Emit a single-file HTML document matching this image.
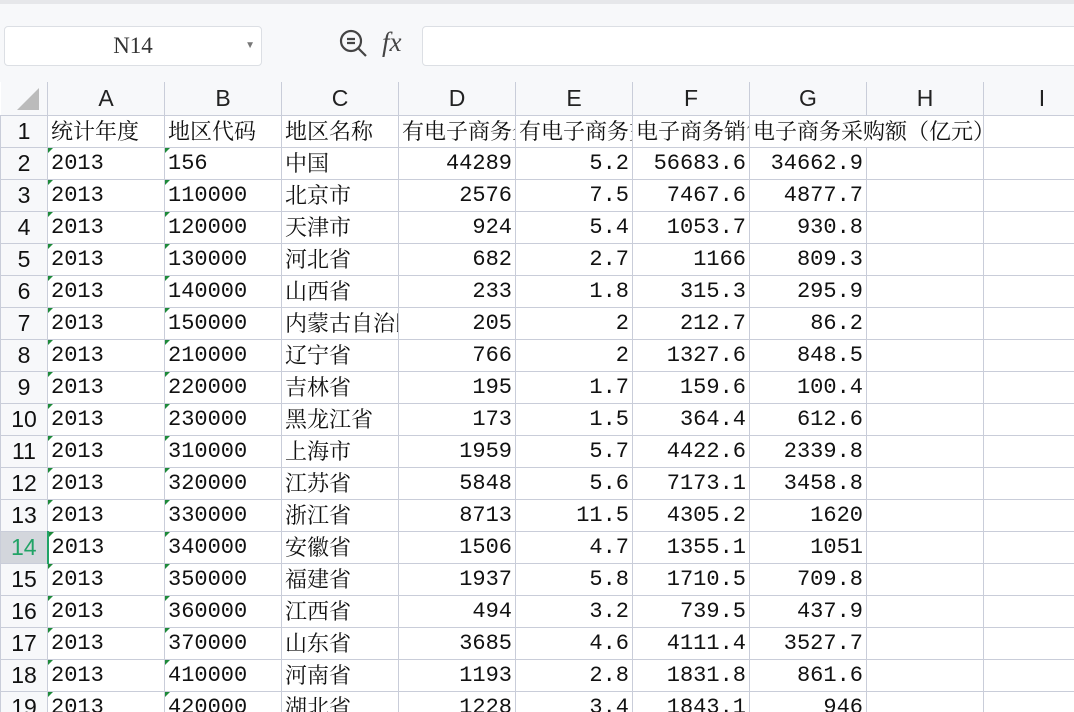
<!DOCTYPE html>
<html><head><meta charset="utf-8"><style>
body{margin:0;width:1074px;height:712px;overflow:hidden;background:#fff;position:relative;font-family:"Liberation Serif","Noto Serif CJK SC",serif}
.top{position:absolute;left:0;top:0;width:1074px;height:82px;background:#f7f8fa;border-top:4px solid #e6e7ea;box-sizing:border-box}
.nb{position:absolute;left:4px;top:22px;width:258px;height:40px;background:#fff;border:1px solid #dcdfe4;border-radius:4px;box-sizing:border-box;font-size:23px;line-height:38px;text-align:center;color:#333}
.nb span{position:absolute;right:6px;top:0;font-size:10px;color:#777}
.fx{position:absolute;left:422px;top:22px;width:660px;height:40px;background:#fff;border:1px solid #dcdfe4;border-radius:4px;box-sizing:border-box}
.wrap{position:absolute;left:0;top:82px;width:1074px;height:630px;overflow:hidden}
table{border-collapse:collapse;table-layout:fixed;width:1100px}
td{border:1px solid #c9cdd9;height:31px;padding:0 3px;white-space:nowrap;overflow:hidden;font-size:23px;line-height:31px;color:#111;position:relative}
tr.h td{height:33px;font-family:"Liberation Sans","Noto Sans CJK SC",sans-serif;font-size:23px;text-align:center;color:#222;background:#f7f8fa;border-top:none}
td.r{font-family:"Liberation Sans",sans-serif;text-align:center;background:#f7f8fa;padding:0;font-size:23px}
td.n{text-align:right;font-family:"Liberation Mono",monospace;font-size:22px}
td.m{font-family:"Liberation Mono",monospace;font-size:22px}
td.g::before{content:"";position:absolute;left:0;top:0;border-top:5px solid #1e8a3a;border-right:5px solid transparent}
td.c{font-family:"Liberation Serif","Noto Serif CJK SC",serif;font-size:22px}
</style></head><body>
<div class="top">
<div class="nb">N14<span>▼</span></div>
<svg style="position:absolute;left:338px;top:24px" width="32" height="32" viewBox="0 0 32 32" fill="none" stroke="#444" stroke-width="2.2"><circle cx="13" cy="13" r="10"/><path d="M20.5 20.5L28 28M9 11h8M9 15h8"/></svg>
<div style="position:absolute;left:382px;top:23px;font-size:27px;font-style:italic;color:#444;font-family:'Liberation Serif',serif">fx</div>
<div class="fx"></div>
</div>
<div class="wrap">
<table>
<colgroup><col style="width:47px"><col style="width:117px"><col style="width:117px"><col style="width:117px"><col style="width:117px"><col style="width:117px"><col style="width:117px"><col style="width:117px"><col style="width:117px"><col style="width:117px"></colgroup>
<tr class="h"><td style="border-left:none"><svg width="22" height="22" style="position:absolute;left:16px;top:6px"><path d="M22 0V22H0Z" fill="#bbb"/></svg></td><td>A</td><td>B</td><td>C</td><td>D</td><td>E</td><td>F</td><td>G</td><td>H</td><td>I</td></tr>
<tr><td class="r">1</td><td class="c">统计年度</td><td class="c">地区代码</td><td class="c">地区名称</td><td class="c">有电子商务企业数</td><td class="c">有电子商务交易</td><td class="c">电子商务销售额</td><td class="c" style="overflow:visible;z-index:2;border-right-color:transparent">电子商务采购额（亿元）</td><td></td><td></td></tr>
<tr><td class="r">2</td><td class="m g">2013</td><td class="m g">156</td><td class="c">中国</td><td class="n">44289</td><td class="n">5.2</td><td class="n">56683.6</td><td class="n">34662.9</td><td></td><td></td></tr>
<tr><td class="r">3</td><td class="m g">2013</td><td class="m g">110000</td><td class="c">北京市</td><td class="n">2576</td><td class="n">7.5</td><td class="n">7467.6</td><td class="n">4877.7</td><td></td><td></td></tr>
<tr><td class="r">4</td><td class="m g">2013</td><td class="m g">120000</td><td class="c">天津市</td><td class="n">924</td><td class="n">5.4</td><td class="n">1053.7</td><td class="n">930.8</td><td></td><td></td></tr>
<tr><td class="r">5</td><td class="m g">2013</td><td class="m g">130000</td><td class="c">河北省</td><td class="n">682</td><td class="n">2.7</td><td class="n">1166</td><td class="n">809.3</td><td></td><td></td></tr>
<tr><td class="r">6</td><td class="m g">2013</td><td class="m g">140000</td><td class="c">山西省</td><td class="n">233</td><td class="n">1.8</td><td class="n">315.3</td><td class="n">295.9</td><td></td><td></td></tr>
<tr><td class="r">7</td><td class="m g">2013</td><td class="m g">150000</td><td class="c">内蒙古自治区</td><td class="n">205</td><td class="n">2</td><td class="n">212.7</td><td class="n">86.2</td><td></td><td></td></tr>
<tr><td class="r">8</td><td class="m g">2013</td><td class="m g">210000</td><td class="c">辽宁省</td><td class="n">766</td><td class="n">2</td><td class="n">1327.6</td><td class="n">848.5</td><td></td><td></td></tr>
<tr><td class="r">9</td><td class="m g">2013</td><td class="m g">220000</td><td class="c">吉林省</td><td class="n">195</td><td class="n">1.7</td><td class="n">159.6</td><td class="n">100.4</td><td></td><td></td></tr>
<tr><td class="r">10</td><td class="m g">2013</td><td class="m g">230000</td><td class="c">黑龙江省</td><td class="n">173</td><td class="n">1.5</td><td class="n">364.4</td><td class="n">612.6</td><td></td><td></td></tr>
<tr><td class="r">11</td><td class="m g">2013</td><td class="m g">310000</td><td class="c">上海市</td><td class="n">1959</td><td class="n">5.7</td><td class="n">4422.6</td><td class="n">2339.8</td><td></td><td></td></tr>
<tr><td class="r">12</td><td class="m g">2013</td><td class="m g">320000</td><td class="c">江苏省</td><td class="n">5848</td><td class="n">5.6</td><td class="n">7173.1</td><td class="n">3458.8</td><td></td><td></td></tr>
<tr><td class="r">13</td><td class="m g">2013</td><td class="m g">330000</td><td class="c">浙江省</td><td class="n">8713</td><td class="n">11.5</td><td class="n">4305.2</td><td class="n">1620</td><td></td><td></td></tr>
<tr><td class="r" style="background:#d3d6dc;color:#21a366;border-right:2px solid #21a366">14</td><td class="m g">2013</td><td class="m g">340000</td><td class="c">安徽省</td><td class="n">1506</td><td class="n">4.7</td><td class="n">1355.1</td><td class="n">1051</td><td></td><td></td></tr>
<tr><td class="r">15</td><td class="m g">2013</td><td class="m g">350000</td><td class="c">福建省</td><td class="n">1937</td><td class="n">5.8</td><td class="n">1710.5</td><td class="n">709.8</td><td></td><td></td></tr>
<tr><td class="r">16</td><td class="m g">2013</td><td class="m g">360000</td><td class="c">江西省</td><td class="n">494</td><td class="n">3.2</td><td class="n">739.5</td><td class="n">437.9</td><td></td><td></td></tr>
<tr><td class="r">17</td><td class="m g">2013</td><td class="m g">370000</td><td class="c">山东省</td><td class="n">3685</td><td class="n">4.6</td><td class="n">4111.4</td><td class="n">3527.7</td><td></td><td></td></tr>
<tr><td class="r">18</td><td class="m g">2013</td><td class="m g">410000</td><td class="c">河南省</td><td class="n">1193</td><td class="n">2.8</td><td class="n">1831.8</td><td class="n">861.6</td><td></td><td></td></tr>
<tr><td class="r">19</td><td class="m g">2013</td><td class="m g">420000</td><td class="c">湖北省</td><td class="n">1228</td><td class="n">3.4</td><td class="n">1843.1</td><td class="n">946</td><td></td><td></td></tr>
</table>
</div>
</body></html>
